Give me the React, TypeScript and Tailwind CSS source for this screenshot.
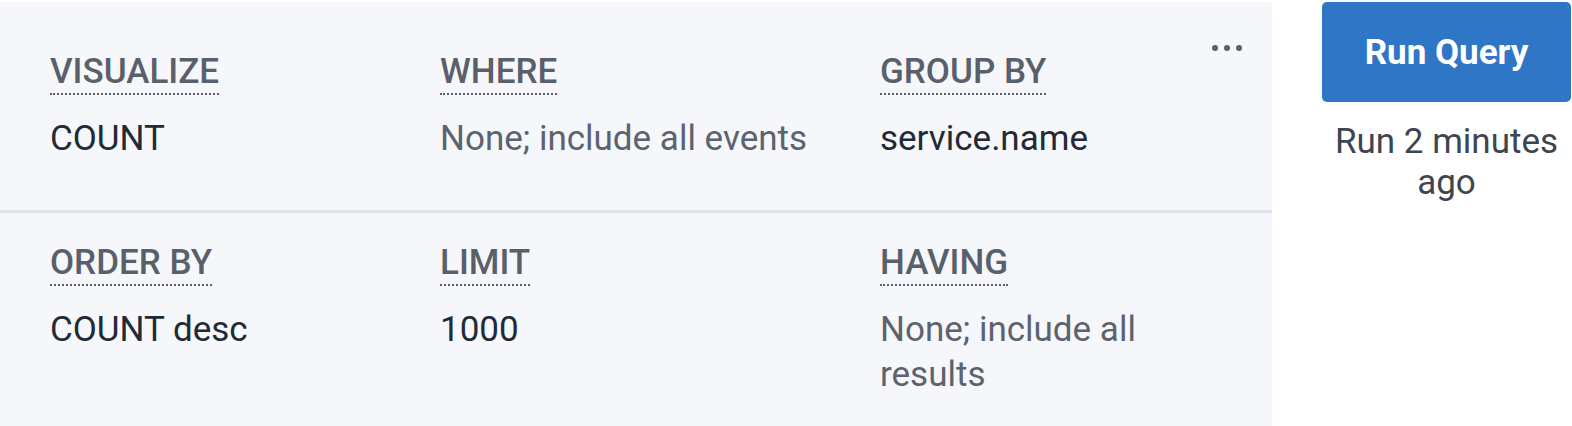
import React from "react";

type Item = { label: string; value: string; muted?: boolean };

const row1: Item[] = [
  { label: "VISUALIZE", value: "COUNT" },
  { label: "WHERE", value: "None; include all events", muted: true },
  { label: "GROUP BY", value: "service.name" },
];

const row2: Item[] = [
  { label: "ORDER BY", value: "COUNT desc" },
  { label: "LIMIT", value: "1000" },
  { label: "HAVING", value: "None; include all results", muted: true },
];

function Cell({ item }: { item: Item }) {
  return (
    <div className="flex flex-col items-start">
      <span className="inline-block border-b-2 border-dotted border-[#5b616c] text-[35px] leading-[43px] font-medium text-[#5a606b]">
        {item.label}
      </span>
      <div
        className={
          "mt-[21px] text-[35px] leading-[45px] pr-[60px] " +
          (item.muted ? "text-[#5c636f]" : "text-[#222a36]")
        }
      >
        {item.value}
      </div>
    </div>
  );
}

export default function App() {
  return (
    <div
      className="flex h-[426px] w-[1572px] bg-white pt-[2px]"
      style={{ fontFamily: "Roboto, 'Liberation Sans', sans-serif" }}
    >
      <div className="relative flex w-[1272px] flex-col bg-[#f5f7fa]">
        <div className="absolute right-[30px] top-[43px] flex gap-[6px]">
          <span className="h-[6px] w-[6px] rounded-full bg-[#5a5f6a]" />
          <span className="h-[6px] w-[6px] rounded-full bg-[#5a5f6a]" />
          <span className="h-[6px] w-[6px] rounded-full bg-[#5a5f6a]" />
        </div>
        <div className="grid grid-cols-[390px_440px_1fr] border-b-[3px] border-[#dfe4eb] pl-[50px] pt-[48px] pb-[49px]">
          {row1.map((it) => (
            <Cell key={it.label} item={it} />
          ))}
        </div>
        <div className="grid flex-1 grid-cols-[390px_440px_1fr] pl-[50px] pt-[28px]">
          {row2.map((it) => (
            <Cell key={it.label} item={it} />
          ))}
        </div>
      </div>
      <div className="ml-[50px] flex w-[249px] flex-col items-center">
        <button className="h-[100px] w-full rounded-[5px] bg-[#3076c6] pt-[2px] text-[35px] font-bold text-white">
          Run Query
        </button>
        <div className="mt-[19px] text-center text-[35px] leading-[41px] text-[#3f4550]">
          Run 2 minutes ago
        </div>
      </div>
    </div>
  );
}
